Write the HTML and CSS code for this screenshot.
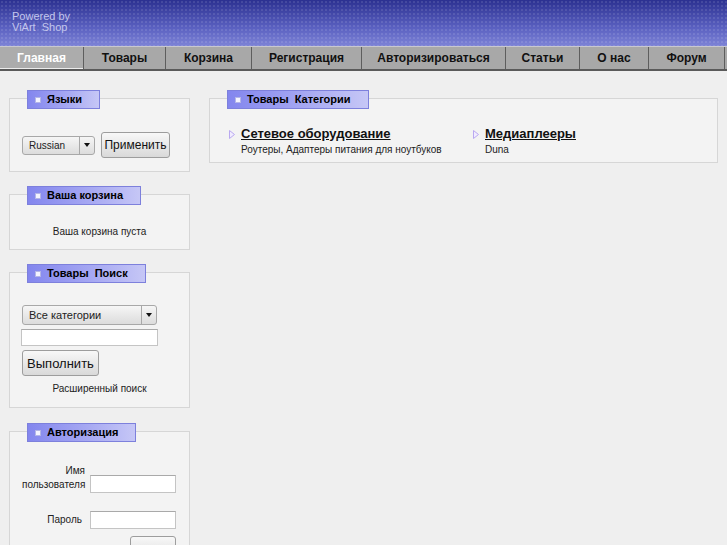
FILE: index.html
```html
<!DOCTYPE html>
<html lang="ru">
<head>
<meta charset="utf-8">
<title>ViArt Shop</title>
<link rel="stylesheet" href="styles.css">
</head>
<body>
<div class="header">
  <div class="powered">Powered by<br>ViArt&nbsp; Shop</div>
</div>
<nav class="menu">
  <a class="tab active" href="#">Главная</a>
  <a class="tab" href="#">Товары</a>
  <a class="tab" href="#">Корзина</a>
  <a class="tab" href="#">Регистрация</a>
  <a class="tab" href="#">Авторизироваться</a>
  <a class="tab" href="#">Статьи</a>
  <a class="tab" href="#">О нас</a>
  <a class="tab" href="#">Форум</a>
</nav>
<div class="page">
  <div class="left">
    <div class="block block-lang">
      <div class="block-title"><span class="sq"></span>Языки</div>
      <div class="lang-row">
        <span class="select sel-lang"><select><option>Russian</option></select><span class="arrow"></span></span>
        <button class="btn btn-apply">Применить</button>
      </div>
    </div>
    <div class="block block-cart">
      <div class="block-title"><span class="sq"></span>Ваша корзина</div>
      <div class="cart-text">Ваша корзина пуста</div>
    </div>
    <div class="block">
      <div class="block-title"><span class="sq"></span>Товары&nbsp; Поиск</div>
      <div class="search">
        <span class="select sel-cat"><select><option>Все категории</option></select><span class="arrow"></span></span>
        <input class="field field-search" type="text">
        <button class="btn btn-search">Выполнить</button>
        <a class="adv" href="#">Расширенный поиск</a>
      </div>
    </div>
    <div class="block block-login">
      <div class="block-title"><span class="sq"></span>Авторизация</div>
      <div class="login">
        <label class="lbl lbl-user">Имя<br>пользователя</label>
        <input class="field field-user" type="text">
        <label class="lbl lbl-pass">Пароль</label>
        <input class="field field-pass" type="password">
        <span></span>
        <button class="btn btn-login"></button>
      </div>
    </div>
  </div>
  <div class="main">
    <div class="block block-main">
      <div class="block-title"><span class="sq"></span>Товары&nbsp; Категории</div>
      <div class="cats">
        <div class="cat">
          <svg class="tri" width="6" height="9" viewBox="0 0 6 9"><polygon points="0.5,0.5 5.5,4.5 0.5,8.5" fill="#f1ecff" stroke="#b9a8f0" stroke-width="1"/></svg>
          <div>
            <a class="cat-link" href="#">Сетевое оборудование</a>
            <div class="cat-desc">Роутеры, Адаптеры питания для ноутбуков</div>
          </div>
        </div>
        <div class="cat">
          <svg class="tri" width="6" height="9" viewBox="0 0 6 9"><polygon points="0.5,0.5 5.5,4.5 0.5,8.5" fill="#f1ecff" stroke="#b9a8f0" stroke-width="1"/></svg>
          <div>
            <a class="cat-link" href="#">Медиаплееры</a>
            <div class="cat-desc">Duna</div>
          </div>
        </div>
      </div>
    </div>
  </div>
</div>
</body>
</html>
```
FILE: styles.css
```css
html, body {
  margin: 0;
  padding: 0;
}
body {
  background: #efefef;
  font-family: "Liberation Sans", Arial, sans-serif;
  font-size: 10px;
  color: #222;
  overflow: hidden;
}

.header {
  height: 46px;
  background-image:
    radial-gradient(circle at 2px 2px, rgba(255,255,255,0.10) 1px, transparent 1.3px),
    linear-gradient(#2c3191, #5a60c0 60%, #7d83d6);
  background-size: 4px 4px, 100% 100%;
}
.powered {
  padding: 11px 0 0 12px;
  font-size: 11px;
  line-height: 11px;
  color: #c3c6ec;
}

.menu {
  display: grid;
  grid-template-columns: 84px 82px 86px 110px 144px 74px 69px 76px 1fr;
  background: #a8a8a8;
  border-top: 1px solid #c8c8cf;
  border-bottom: 2px solid #5a5a5a;
  height: 22px;
}
.tab {
  display: block;
  text-align: center;
  line-height: 22px;
  font-weight: bold;
  font-size: 12px;
  color: #111;
  text-decoration: none;
  border-right: 1px solid #5e5e5e;
}
.tab.active {
  color: #fff;
  background: #acacac;
  box-shadow: inset 0 -1px 0 #ececec;
}

.page {
  display: flex;
  align-items: flex-start;
  gap: 19px;
  padding: 27px 9px 0 9px;
}
.left {
  width: 181px;
  display: flex;
  flex-direction: column;
  gap: 22px;
}
.main {
  width: 509px;
}

.block {
  background: #f3f3f3;
  border: 1px solid #d6d6d6;
  padding: 0 12px 12px;
}
.block-lang {
  padding-bottom: 13px;
}
.block-cart {
  padding-bottom: 11px;
}
.block-login {
  margin-top: 1px;
}
.block-title {
  display: flex;
  align-items: center;
  width: fit-content;
  height: 17px;
  margin: -9px 0 0 5px;
  padding: 0 17px 0 7px;
  border: 1px solid #7d80dc;
  background: linear-gradient(to right, #8386ee, #a6a8f2 55%, #c6c7f6);
  font-weight: bold;
  font-size: 11px;
  line-height: 13px;
  color: #000;
  white-space: nowrap;
}
.sq {
  display: inline-block;
  width: 4px;
  height: 4px;
  margin-right: 6px;
  background: #f4f4ff;
  border: 1px solid #b4b6e6;
}

.lang-row {
  display: flex;
  align-items: center;
  gap: 6px;
  margin-top: 23px;
}

.select {
  display: inline-flex;
  box-sizing: border-box;
  border: 1px solid #a8a8a8;
  border-radius: 3px;
  background: linear-gradient(#f6f6f6, #dcdcdc);
}
.select select {
  appearance: none;
  -webkit-appearance: none;
  border: 0;
  background: transparent;
  font-family: "Liberation Sans", Arial, sans-serif;
  font-size: 10px;
  color: #222;
  padding: 0 0 0 6px;
  margin: 0;
  flex: 1;
  min-width: 0;
  outline: none;
}
.select .arrow {
  width: 14px;
  border-left: 1px solid #a8a8a8;
  display: flex;
  align-items: center;
  justify-content: center;
}
.select .arrow::before {
  content: "";
  border-left: 3.5px solid transparent;
  border-right: 3.5px solid transparent;
  border-top: 4px solid #111;
}
.sel-lang {
  width: 73px;
  height: 19px;
}
.sel-cat {
  width: 135px;
  height: 20px;
}
.sel-cat select {
  font-size: 11px;
}

.btn {
  box-sizing: border-box;
  height: 26px;
  border: 1px solid #9d9d9d;
  border-radius: 3px;
  background: linear-gradient(#f8f8f8, #d9d9d9);
  font-family: "Liberation Sans", Arial, sans-serif;
  font-size: 12px;
  color: #111;
  padding: 0;
}
.btn-apply {
  width: 69px;
}
.btn-search {
  width: 77px;
  font-size: 13px;
}
.btn-login {
  width: 46px;
  justify-self: end;
  margin-top: 7px;
}

.cart-text {
  text-align: center;
  margin-top: 21px;
  line-height: 12px;
}

.search {
  display: flex;
  flex-direction: column;
  align-items: flex-start;
  margin-top: 22px;
}
.field {
  box-sizing: border-box;
  background: #fff;
  border: 1px solid #c4c4c4;
  border-top-color: #a9a9a9;
  padding: 0 2px;
  margin: 0;
  outline: none;
}
.field-search {
  width: 137px;
  height: 17px;
  margin: 4px 0 4px -1px;
}
.adv {
  align-self: center;
  margin-top: 7px;
  color: #222;
  text-decoration: none;
  line-height: 12px;
}

.login {
  display: grid;
  grid-template-columns: 63px 86px;
  column-gap: 5px;
  margin-top: 22px;
}
.lbl {
  text-align: right;
  line-height: 14px;
}
.field-user {
  width: 86px;
  height: 18px;
  margin-top: 11px;
}
.lbl-pass {
  align-self: center;
  margin-top: 18px;
  padding-right: 3px;
}
.field-pass {
  width: 86px;
  height: 18px;
  margin-top: 18px;
}

.block-main {
  padding-bottom: 6px;
}
.cats {
  display: grid;
  grid-template-columns: 244px 244px;
  margin-top: 17px;
  padding-left: 7px;
}
.cat {
  display: flex;
  gap: 6px;
}
.tri {
  margin-top: 4px;
  flex: none;
}
.cat-link {
  font-size: 13px;
  font-weight: bold;
  color: #111;
  line-height: 16px;
  text-decoration: underline;
}
.cat-desc {
  font-size: 10px;
  line-height: 12px;
  margin-top: 2px;
  color: #222;
}
```
